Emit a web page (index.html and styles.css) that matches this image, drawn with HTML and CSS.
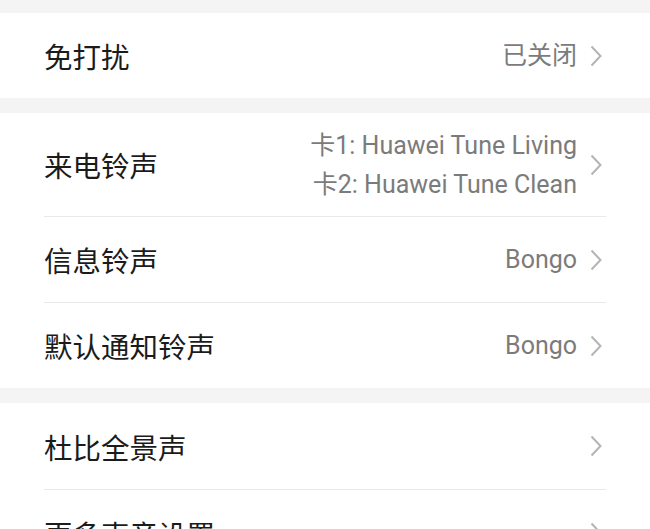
FILE: index.html
```html
<!doctype html>
<html>
<head>
<meta charset="utf-8">
<title>声音</title>
<link rel="stylesheet" href="styles.css">
</head>
<body>
	<div class="list">
		<ul class="card">
			<li class="row">
				<span class="title">免打扰</span>
				<span class="value">已关闭</span>
				<svg class="arrow" viewBox="0 0 12 22"><polyline points="1.5,1.5 10.5,11 1.5,20.5"/></svg>
			</li>
		</ul>
		<ul class="card">
			<li class="row row2">
				<span class="title">来电铃声</span>
				<span class="value">
					<em>卡1: Huawei Tune Living</em>
					<em>卡2: Huawei Tune Clean</em>
				</span>
				<svg class="arrow" viewBox="0 0 12 22"><polyline points="1.5,1.5 10.5,11 1.5,20.5"/></svg>
			</li>
			<li class="row">
				<span class="title">信息铃声</span>
				<span class="value">Bongo</span>
				<svg class="arrow" viewBox="0 0 12 22"><polyline points="1.5,1.5 10.5,11 1.5,20.5"/></svg>
			</li>
			<li class="row">
				<span class="title">默认通知铃声</span>
				<span class="value">Bongo</span>
				<svg class="arrow" viewBox="0 0 12 22"><polyline points="1.5,1.5 10.5,11 1.5,20.5"/></svg>
			</li>
		</ul>
		<ul class="card card3">
			<li class="row">
				<span class="title">杜比全景声</span>
				<span class="value"></span>
				<svg class="arrow" viewBox="0 0 12 22"><polyline points="1.5,1.5 10.5,11 1.5,20.5"/></svg>
			</li>
			<li class="row">
				<span class="title">更多声音设置</span>
				<span class="value"></span>
				<svg class="arrow" viewBox="0 0 12 22"><polyline points="1.5,1.5 10.5,11 1.5,20.5"/></svg>
			</li>
		</ul>
	</div>
</body>
</html>
```

FILE: styles.css
```css
html,
body {
	margin: 0;
	height: 529px;
	overflow: hidden;
	background: #f4f4f4;
}
body {
	font-family: Roboto, "Noto Sans CJK SC", sans-serif;
}
ul {
	list-style: none;
	margin: 0;
	padding: 0;
}
em {
	font-style: normal;
	display: block;
}
.list {
	display: flex;
	flex-direction: column;
	gap: 15px;
	padding-top: 13px;
}
.card {
	background: #fff;
	padding: 0 44px;
}
.row {
	display: flex;
	align-items: center;
	min-height: 85px;
	border-bottom: 1px solid #e9e9e9;
}
.row:last-child {
	border-bottom: none;
}
.row2 {
	min-height: 103px;
}
.card3 .row {
	min-height: 86px;
}
.title {
	flex: 1;
	font-family: "Noto Sans CJK SC", sans-serif;
	font-size: 28.5px;
	color: #1b1b1b;
}
.value {
	font-size: 25px;
	line-height: 39px;
	color: #7b7b7b;
	text-align: right;
}
.arrow {
	width: 12px;
	height: 22px;
	margin: 0 4px 0 13px;
	fill: none;
	stroke: #b4b4b4;
	stroke-width: 2;
}
```
